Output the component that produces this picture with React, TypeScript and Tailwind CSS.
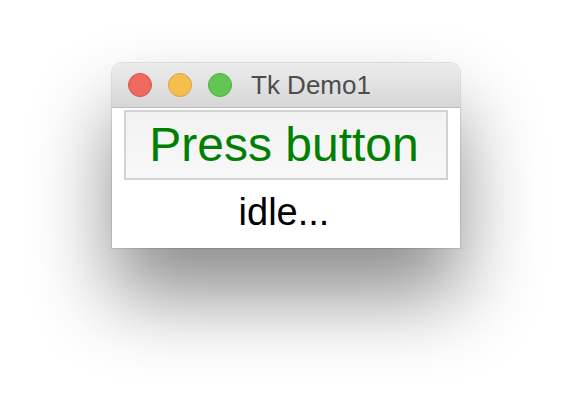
export default function App() {
  return (
    <div className="w-[572px] h-[408px] bg-white pl-[112px] pt-[63px] overflow-hidden" style={{ fontFamily: '"Liberation Sans", Arial, sans-serif' }}>
      <div className="w-[348px] rounded-t-[10px] bg-white shadow-[0_0_0_1px_rgba(0,0,0,0.1),0_48px_80px_rgba(0,0,0,0.45)]">
        {/* title bar */}
        <div className="h-[45px] rounded-t-[10px] bg-gradient-to-b from-[#ececec] to-[#d6d6d6] border-b border-[#bdbdbd] flex items-center">
          <div className="flex items-center gap-[16px] pl-[16px]">
            <span className="block w-[24px] h-[24px] rounded-full bg-[#ee6a5f] border border-[#d8534a]" />
            <span className="block w-[24px] h-[24px] rounded-full bg-[#f5bf4f] border border-[#d9a33c]" />
            <span className="block w-[24px] h-[24px] rounded-full bg-[#62c655] border border-[#4fae44]" />
          </div>
          <span className="ml-[19px] text-[26px] leading-none text-[#4d4d4d]">Tk Demo1</span>
        </div>
        {/* body */}
        <div className="flex flex-col px-[12px] pt-[2px] h-[140px]">
          <button className="h-[70px] border-2 border-[#d2d2d2] bg-gradient-to-b from-[#f2f2f2] to-[#f8f8f8] text-[48px] leading-none text-[#008000] flex items-center justify-center pr-[4px]">
            Press button
          </button>
          <div className="flex-1 flex items-center justify-center text-[38px] leading-none text-black pb-[4px] pr-[4px]">
            idle...
          </div>
        </div>
      </div>
    </div>
  )
}
